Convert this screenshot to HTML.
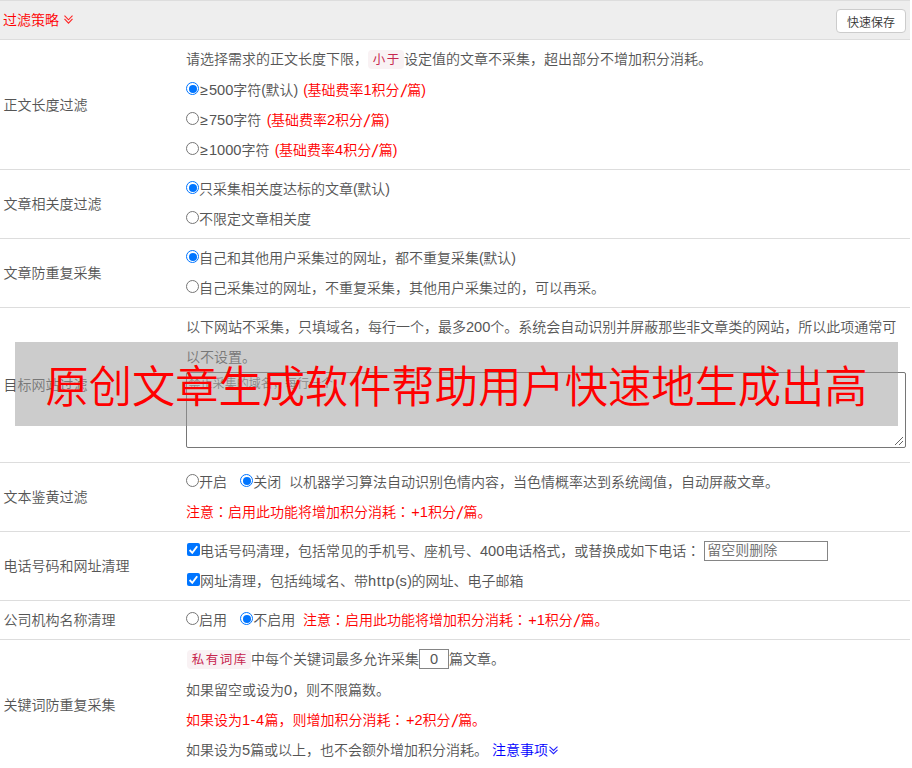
<!DOCTYPE html>
<html lang="zh-CN">
<head>
<meta charset="utf-8">
<title>过滤策略</title>
<style>
html,body{margin:0;padding:0;background:#fff;}
body{width:912px;height:768px;overflow:hidden;position:relative;
  font-family:"Liberation Sans","Noto Sans CJK SC",sans-serif;font-size:14px;color:#555;font-weight:350;}
*{box-sizing:border-box;}
#wrap{position:absolute;left:0;top:0;width:910px;height:768px;overflow:hidden;}
.hd{position:absolute;left:0;top:0;width:910px;height:40px;background:#eee;border-top:1px solid #ddd;border-bottom:1px solid #ddd;}
.hd .t{position:absolute;left:3px;top:4px;line-height:30px;color:#f00;font-size:14px;}
.hd .btn{position:absolute;left:836px;top:8px;width:70px;height:24px;border:1px solid #ccc;border-radius:4px;background:#fff;
  font-size:12px;line-height:26px;text-align:center;color:#333;}
.row{position:absolute;left:0;width:910px;border-bottom:1px solid #ddd;}
.lab{position:absolute;left:3.5px;top:0;height:100%;display:flex;align-items:center;line-height:30px;}
.ct{position:absolute;left:186px;top:4px;right:4px;}
.ln{height:30px;line-height:30px;white-space:nowrap;}
.red{color:#f00;}
.n{font-size:14.6px;line-height:0;letter-spacing:0;}
.sl{display:inline-block;width:7.6px;text-align:center;position:relative;top:1.5px;font-size:17.5px;line-height:14px;transform:skewX(-9deg);}
.p{letter-spacing:-.45px;}
.g1{display:inline-block;width:13.3px;}
.g2{display:inline-block;width:7.6px;}
.c{font-family:"Liberation Sans","Noto Sans CJK JP",sans-serif;}
.ge{display:inline-block;width:10px;text-align:center;line-height:0;}
.rd{display:inline-block;width:13px;height:13px;border:1px solid #767676;border-radius:50%;background:#fff;vertical-align:0px;margin:0;position:relative;}
.rd.on{border-color:#0075ff;}
.rd.on:after{content:"";position:absolute;left:1.5px;top:1.5px;width:8px;height:8px;border-radius:50%;background:#0075ff;}
.cb{display:inline-block;width:13px;height:13px;border-radius:2px;background:#0075ff;vertical-align:0px;position:relative;margin-left:1px;}
.cb svg{position:absolute;left:0;top:0;}
code{display:inline-block;font-family:"Liberation Sans","Noto Sans CJK SC",sans-serif;font-weight:400;font-size:12.5px;letter-spacing:1.5px;color:#c7254e;background:#f9f2f4;border-radius:4px;padding:0 3.25px 0 4.75px;height:19px;line-height:20px;vertical-align:0px;}
.ta{position:absolute;left:186px;top:64px;width:720px;height:76px;border:1px solid #767676;border-radius:2px;background:#fff;}
.inp{display:inline-block;border:1px solid #858585;background:#fff;height:20px;vertical-align:top;position:relative;top:5px;}
#ov{position:absolute;left:15px;top:342px;width:883px;height:84px;background:rgba(153,153,153,0.5);text-align:center;}
#ov span{display:block;line-height:84px;font-size:43.1px;color:#f00;white-space:nowrap;font-weight:350;position:relative;top:3px;transform:scale(1.004,1.04);transform-origin:50% 50%;}
a.lk{color:#00f;text-decoration:none;}
</style>
</head>
<body>
<div id="wrap">
  <div class="hd"><span class="t">过滤策略</span><svg width="10" height="10" viewBox="0 0 10 10" style="position:absolute;left:63.5px;top:14px;"><path d="M0.5 0.6L4.5 4.8L8.5 0.6M0.5 3.9L4.5 8.1L8.5 3.9" stroke="#f22" stroke-width="1.1" fill="none"/></svg><span class="btn">快速保存</span></div>

  <div class="row" style="top:40px;height:130px;">
    <div class="lab">正文长度过滤</div>
    <div class="ct">
      <div class="ln" style="height:31px">请选择需求的正文长度下限，<code>小于</code>设定值的文章不采集，超出部分不增加积分消耗。</div>
      <div class="ln"><span class="rd on"></span><span class="ge">≥</span><span class="n">500</span>字符<span class="p">(</span>默认<span class="p">)</span> <span class="red" style="margin-left:1.5px"><span class="p">(</span>基础费率<span class="n">1</span>积分<span class="sl">/</span>篇<span class="p">)</span></span></div>
      <div class="ln"><span class="rd"></span><span class="ge">≥</span><span class="n">750</span>字符 <span class="red" style="margin-left:1.5px"><span class="p">(</span>基础费率<span class="n">2</span>积分<span class="sl">/</span>篇<span class="p">)</span></span></div>
      <div class="ln"><span class="rd"></span><span class="ge">≥</span><span class="n">1000</span>字符 <span class="red" style="margin-left:1.5px"><span class="p">(</span>基础费率<span class="n">4</span>积分<span class="sl">/</span>篇<span class="p">)</span></span></div>
    </div>
  </div>

  <div class="row" style="top:170px;height:69px;">
    <div class="lab">文章相关度过滤</div>
    <div class="ct">
      <div class="ln"><span class="rd on"></span>只采集相关度达标的文章<span class="p">(</span>默认<span class="p">)</span></div>
      <div class="ln"><span class="rd"></span>不限定文章相关度</div>
    </div>
  </div>

  <div class="row" style="top:239px;height:69px;">
    <div class="lab">文章防重复采集</div>
    <div class="ct">
      <div class="ln"><span class="rd on"></span>自己和其他用户采集过的网址，都不重复采集<span class="p">(</span>默认<span class="p">)</span></div>
      <div class="ln"><span class="rd"></span>自己采集过的网址，不重复采集，其他用户采集过的，可以再采。</div>
    </div>
  </div>

  <div class="row" style="top:308px;height:155px;">
    <div class="lab">目标网站过滤</div>
    <div class="ct">
      <div class="ln">以下网站不采集，只填域名，每行一个，最多<span class="n">200</span>个。系统会自动识别并屏蔽那些非文章类的网站，所以此项通常可</div>
      <div class="ln">以不设置。</div>
    </div>
    <div class="ta"><span style="position:absolute;left:1.5px;top:2.5px;letter-spacing:.05px;font-size:12px;line-height:16px;color:#757575;">禁止采集的域名，每行一个</span>
      <svg width="12" height="12" style="position:absolute;right:1px;bottom:1px" viewBox="0 0 12 12"><path d="M11 3L3 11M11 7L7 11" stroke="#666" stroke-width="1" fill="none"/></svg>
    </div>
  </div>

  <div class="row" style="top:463px;height:69px;">
    <div class="lab">文本鉴黄过滤</div>
    <div class="ct">
      <div class="ln"><span class="rd"></span>开启<span class="g1"></span><span class="rd on"></span>关闭<span class="g2"></span>以机器学习算法自动识别色情内容，当色情概率达到系统阈值，自动屏蔽文章。</div>
      <div class="ln red">注意<span class="c" lang="ja">：</span>启用此功能将增加积分消耗<span class="c" lang="ja">：</span><span class="n" style="margin-left:1.3px">+1</span>积分<span class="sl">/</span>篇。</div>
    </div>
  </div>

  <div class="row" style="top:532px;height:69px;">
    <div class="lab">电话号码和网址清理</div>
    <div class="ct">
      <div class="ln"><span class="cb"><svg width="13" height="13" viewBox="0 0 13 13"><path d="M2.6 7L5.3 9.8L10.2 3.2" stroke="#fff" stroke-width="1.9" fill="none"/></svg></span>电话号码清理，包括常见的手机号、座机号、<span class="n">400</span>电话格式，或替换成如下电话<span class="c" lang="ja">：</span> <span class="inp" style="width:124px;font-size:14px;line-height:17px;color:#757575;padding-left:2px;font-weight:400;">留空则删除</span></div>
      <div class="ln"><span class="cb"><svg width="13" height="13" viewBox="0 0 13 13"><path d="M2.6 7L5.3 9.8L10.2 3.2" stroke="#fff" stroke-width="1.9" fill="none"/></svg></span>网址清理，包括纯域名、带<span class="n" style="letter-spacing:.7px">http</span><span class="p">(</span><span class="n" style="letter-spacing:.6px">s</span><span class="p">)</span>的网址、电子邮箱</div>
    </div>
  </div>

  <div class="row" style="top:601px;height:39px;">
    <div class="lab">公司机构名称清理</div>
    <div class="ct">
      <div class="ln"><span class="rd"></span>启用<span class="g1"></span><span class="rd on"></span>不启用<span class="g2"></span><span class="red">注意<span class="c" lang="ja">：</span>启用此功能将增加积分消耗<span class="c" lang="ja">：</span><span class="n" style="margin-left:1.3px">+1</span>积分<span class="sl">/</span>篇。</span></div>
    </div>
  </div>

  <div class="row" style="top:640px;height:130px;">
    <div class="lab">关键词防重复采集</div>
    <div class="ct">
      <div class="ln" style="height:31px"><code style="margin-left:1px">私有词库</code>中每个关键词最多允许采集<span class="inp" style="width:30px;text-align:center;line-height:18px;"><span class="n">0</span></span>篇文章。</div>
      <div class="ln">如果留空或设为<span class="n">0</span>，则不限篇数。</div>
      <div class="ln red">如果设为<span class="n" style="letter-spacing:.5px">1-4</span>篇，则增加积分消耗<span class="c" lang="ja">：</span><span class="n" style="margin-left:1.3px">+2</span>积分<span class="sl">/</span>篇。</div>
      <div class="ln">如果设为<span class="n">5</span>篇或以上，也不会额外增加积分消耗。 <a class="lk">注意事项<svg width="10" height="10" viewBox="0 0 10 10" style="display:inline-block;vertical-align:0px;margin-left:0.5px;"><path d="M0.5 1.6L4.5 5.4L8.5 1.6M0.5 4.9L4.5 8.7L8.5 4.9" stroke="#22f" stroke-width="1.1" fill="none"/></svg></a></div>
    </div>
  </div>

  <div id="ov"><span>原创文章生成软件帮助用户快速地生成出高</span></div>
</div>
</body>
</html>
